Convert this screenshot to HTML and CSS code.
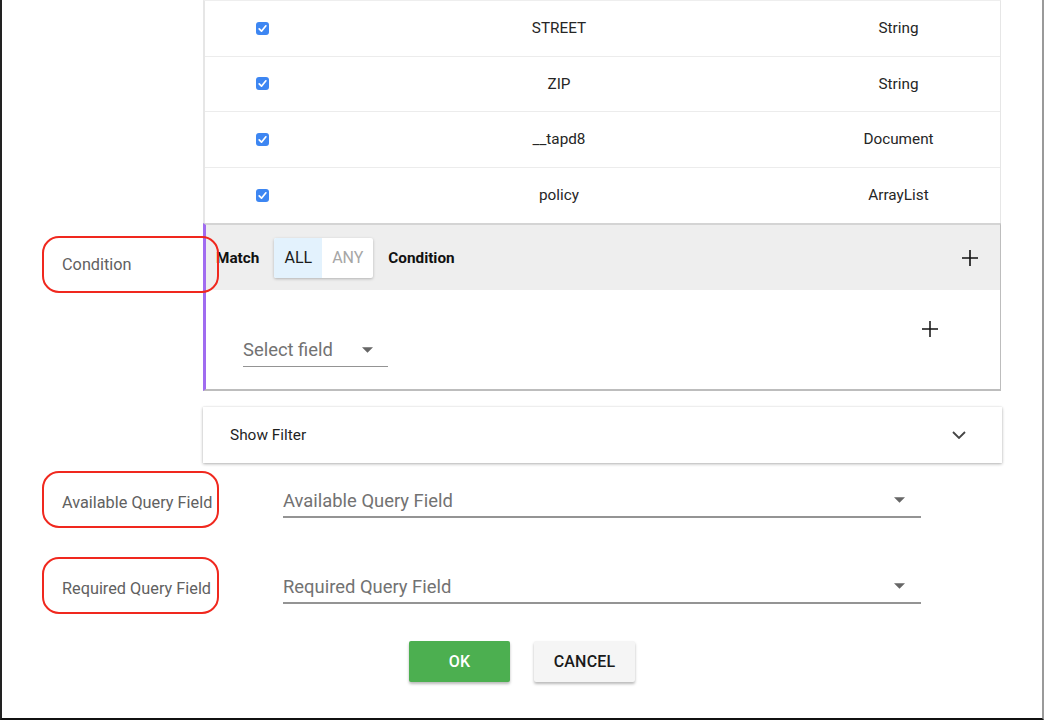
FILE: index.html
```html
<!DOCTYPE html>
<html>
<head>
<meta charset="utf-8">
<link rel="stylesheet" href="styles.css">
</head>
<body>
<div class="dialog">
  <div class="grid">
    <div class="gutter"></div>
    <div class="table">
      <div class="trow">
        <div class="tc c1"><svg class="cb" viewBox="0 0 13 13"><rect width="13" height="13" rx="3" fill="#3d86f2"/><path d="M3.2 6.8 L5.5 9.2 L9.9 3.8" fill="none" stroke="#fff" stroke-width="1.7" stroke-linecap="round" stroke-linejoin="round"/></svg></div>
        <div class="tc c2">STREET</div>
        <div class="tc c3">String</div>
      </div>
      <div class="trow">
        <div class="tc c1"><svg class="cb" viewBox="0 0 13 13"><rect width="13" height="13" rx="3" fill="#3d86f2"/><path d="M3.2 6.8 L5.5 9.2 L9.9 3.8" fill="none" stroke="#fff" stroke-width="1.7" stroke-linecap="round" stroke-linejoin="round"/></svg></div>
        <div class="tc c2">ZIP</div>
        <div class="tc c3">String</div>
      </div>
      <div class="trow">
        <div class="tc c1"><svg class="cb" viewBox="0 0 13 13"><rect width="13" height="13" rx="3" fill="#3d86f2"/><path d="M3.2 6.8 L5.5 9.2 L9.9 3.8" fill="none" stroke="#fff" stroke-width="1.7" stroke-linecap="round" stroke-linejoin="round"/></svg></div>
        <div class="tc c2">__tapd8</div>
        <div class="tc c3">Document</div>
      </div>
      <div class="trow">
        <div class="tc c1"><svg class="cb" viewBox="0 0 13 13"><rect width="13" height="13" rx="3" fill="#3d86f2"/><path d="M3.2 6.8 L5.5 9.2 L9.9 3.8" fill="none" stroke="#fff" stroke-width="1.7" stroke-linecap="round" stroke-linejoin="round"/></svg></div>
        <div class="tc c2">policy</div>
        <div class="tc c3">ArrayList</div>
      </div>
    </div>

    <div class="gutter"><div class="label label-cond">Condition</div></div>
    <div class="cond">
      <div class="cond-head">
        <span class="bold">Match</span>
        <div class="toggle"><span class="tg tg-on">ALL</span><span class="tg tg-off">ANY</span></div>
        <span class="bold">Condition</span>
        <svg class="plus plus-head" viewBox="0 0 16 16"><path d="M8 0 V16 M0 8 H16" stroke="#111" stroke-width="1.6"/></svg>
      </div>
      <div class="cond-body">
        <div class="select small">
          <span>Select field</span>
          <svg class="caret" viewBox="0 0 10 5"><path d="M0 0 H10 L5 5 Z" fill="#666"/></svg>
        </div>
        <svg class="plus plus-body" viewBox="0 0 16 16"><path d="M8 0 V16 M0 8 H16" stroke="#111" stroke-width="1.5"/></svg>
      </div>
    </div>

    <div class="gutter"></div>
    <div class="filter">
      <span>Show Filter</span>
      <svg class="chev" viewBox="0 0 14 8"><path d="M1 1 L7 7 L13 1" fill="none" stroke="#444" stroke-width="1.8"/></svg>
    </div>

    <div class="gutter"><div class="label label-avail">Available Query Field</div></div>
    <div class="field-row avail">
      <div class="select wide">
        <span>Available Query Field</span>
        <svg class="caret" viewBox="0 0 10 5"><path d="M0 0 H10 L5 5 Z" fill="#666"/></svg>
      </div>
    </div>

    <div class="gutter"><div class="label label-req">Required Query Field</div></div>
    <div class="field-row req">
      <div class="select wide">
        <span>Required Query Field</span>
        <svg class="caret" viewBox="0 0 10 5"><path d="M0 0 H10 L5 5 Z" fill="#666"/></svg>
      </div>
    </div>
  </div>

  <div class="buttons">
    <button class="btn ok">OK</button>
    <button class="btn cancel">CANCEL</button>
  </div>
</div>
</body>
</html>
```

FILE: styles.css
```css
* { box-sizing: border-box; }
html, body { margin: 0; padding: 0; background: #fff; }
body {
  font-family: Roboto, "Liberation Sans", sans-serif;
  color: #212121;
  width: 1044px;
  height: 720px;
  overflow: hidden;
}
.dialog {
  width: 1044px;
  height: 720px;
  border-left: 2px solid #222;
  border-right: 2px solid #9a9a9a;
  border-bottom: 2px solid #111;
  background: #fff;
}
.grid {
  display: grid;
  grid-template-columns: 201px 798px;
  align-items: start;
}
.gutter { position: relative; }

/* table */
.table {
  border-left: 2px solid #e6e6e6;
  border-right: 1px solid #e6e6e6;
  border-top: 1px solid #eee;
}
.trow {
  display: grid;
  grid-template-columns: 116px 476px 1fr;
  height: 55.5px;
  border-bottom: 1px solid #ececec;
  font-size: 15.3px;
  color: #262626;
}
.trow:last-child { border-bottom: none; }
.tc { display: flex; align-items: center; justify-content: center; }
.c1 { padding-right: 2px; }
.cb { width: 13px; height: 13px; display: block; }

/* labels */
.label {
  border: 2px solid #f0281e;
  border-radius: 17px;
  width: 177px;
  height: 57px;
  margin-left: 40px;
  display: flex;
  align-items: center;
  padding-left: 18px;
  font-size: 16.3px;
  color: #616161;
  white-space: nowrap;
}
.label-cond { margin-top: 13px; }
.label-avail, .label-req { padding-top: 5px; }

/* condition */
.cond {
  border-top: 2px solid #d4d4d4;
  border-left: 3px solid #a06cf0;
  border-right: 1px solid #bdbdbd;
  border-bottom: 2px solid #bdbdbd;
  height: 168px;
}
.cond-head {
  background: #eeeeee;
  height: 65px;
  display: flex;
  align-items: center;
  padding-left: 10px;
  padding-right: 22px;
  font-size: 15.3px;
}
.bold { font-weight: 700; color: #111; }
.toggle {
  display: flex;
  height: 40px;
  margin-left: 15px;
  margin-right: 15px;
  background: #fff;
  border-radius: 2px;
  box-shadow: 0 1px 3px rgba(0,0,0,0.25);
  overflow: hidden;
}
.tg {
  display: flex;
  align-items: center;
  justify-content: center;
  font-size: 16px;
}
.tg-on { width: 48px; background: #e3f2fd; color: #1a1a1a; }
.tg-off { width: 51px; color: #a6a6a6; }
.plus { width: 16px; height: 16px; display: block; }
.plus-head { margin-left: auto; }
.cond-body {
  position: relative;
  height: 99px;
  padding-left: 37px;
  padding-top: 43px;
}
.plus-body { position: absolute; left: 716px; top: 31px; }

/* select */
.select {
  display: flex;
  align-items: center;
  border-bottom: 1px solid #949494;
  font-size: 18.4px;
  color: #727272;
  height: 34px;
  padding-bottom: 0;
}
.select.small { width: 145px; }
.select.small .caret { margin-left: 29px; }
.select.wide { width: 638px; border-bottom-width: 2px; }
.select.wide .caret { margin-left: auto; margin-right: 16px; }
.caret { width: 11px; height: 6px; display: block; }

/* filter */
.filter {
  margin-top: 16px;
  height: 56px;
  width: 799px;
  display: flex;
  align-items: center;
  padding-left: 27px;
  padding-right: 36px;
  font-size: 15.4px;
  color: #1f1f1f;
  box-shadow: 0 1px 3px rgba(0,0,0,0.3), 0 0 1px rgba(0,0,0,0.1);
  background: #fff;
}
.chev { width: 14px; height: 8px; margin-left: auto; display: block; }

/* field rows */
.gutter .label-avail { margin-top: 8px; }
.gutter .label-req { margin-top: 29px; }
.field-row { padding-left: 80px; }
.field-row.avail { margin-top: 21px; }
.field-row.req { margin-top: 42px; }

/* buttons */
.buttons {
  display: flex;
  justify-content: center;
  gap: 24px;
  margin-top: 27px;
}
.btn {
  width: 101px;
  height: 41px;
  border: none;
  border-radius: 2px;
  font-family: Roboto, "Liberation Sans", sans-serif;
  font-size: 16px;
  font-weight: 500;
  letter-spacing: 0.2px;
  box-shadow: 0 2px 3px rgba(0,0,0,0.28);
}
.ok { background: #4caf50; color: #fff; }
.cancel { background: #f5f5f5; color: #1a1a1a; }
```
